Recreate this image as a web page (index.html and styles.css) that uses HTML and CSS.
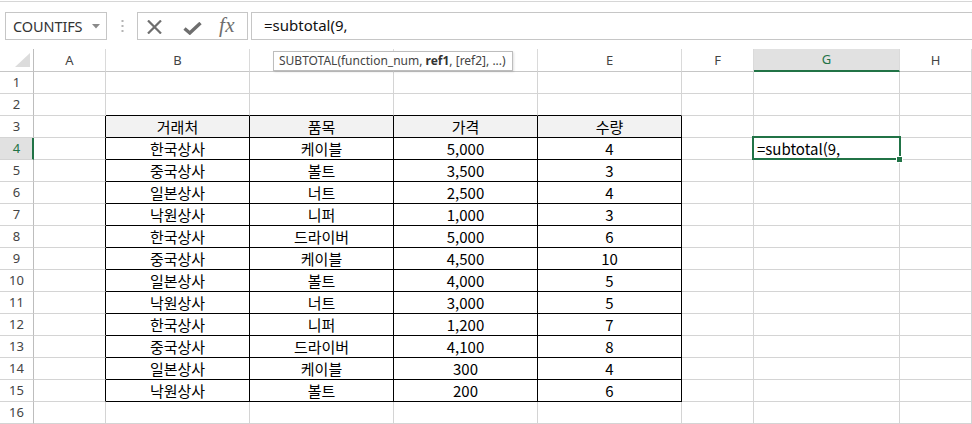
FILE: index.html
```html
<!DOCTYPE html>
<html lang="ko">
<head>
<meta charset="utf-8">
<title>Excel - SUBTOTAL</title>
<link rel="stylesheet" href="styles.css">
</head>
<body>
<div class="app">
  <div class="topline"></div>
  <div class="fbar">
    <div class="namebox">
      <span class="nb-text">COUNTIFS</span>
      <svg class="nb-arrow" width="8" height="5" viewBox="0 0 8 5"><path d="M0 0H8L4 4.5Z" fill="#8a8a8a"/></svg>
    </div>
    <div class="grip">
      <svg width="3" height="12" viewBox="0 0 3 12"><rect x="0.5" y="0" width="2" height="2" fill="#b4b4b4"/><rect x="0.5" y="5" width="2" height="2" fill="#b4b4b4"/><rect x="0.5" y="10" width="2" height="2" fill="#b4b4b4"/></svg>
    </div>
    <div class="fbtns">
      <svg class="ic-x" width="15" height="14" viewBox="0 0 15 14"><path d="M1 0.5L14 13.5M14 0.5L1 13.5" stroke="#6e6e6e" stroke-width="2.2" fill="none"/></svg>
      <svg class="ic-ok" width="19" height="13" viewBox="0 0 19 13"><path d="M1.5 6.5L6.8 11L17.5 1" stroke="#6e6e6e" stroke-width="3.4" fill="none" stroke-linejoin="miter"/></svg>
      <span class="fx">fx</span>
    </div>
    <div class="finput">=subtotal(9,</div>
  </div>

  <div class="sheet">
    <div class="row hdr">
      <div class="corner"><svg width="15" height="14" viewBox="0 0 15 14"><path d="M15 0V14H0Z" fill="#dcdcdc"/></svg></div>
      <div class="ch">A</div><div class="ch">B</div><div class="ch">C</div><div class="ch">D</div><div class="ch">E</div><div class="ch">F</div><div class="ch sel">G</div><div class="ch">H</div>
    </div>
    <div class="row"><div class="rh">1</div><div class="c"></div><div class="c"></div><div class="c"></div><div class="c"></div><div class="c"></div><div class="c"></div><div class="c"></div><div class="c"></div></div>
    <div class="row"><div class="rh">2</div><div class="c"></div><div class="c tt"></div><div class="c tt"></div><div class="c tt"></div><div class="c tt"></div><div class="c"></div><div class="c"></div><div class="c"></div></div>
    <div class="row"><div class="rh">3</div><div class="c tl"></div><div class="c t th">거래처</div><div class="c t th">품목</div><div class="c t th">가격</div><div class="c t th">수량</div><div class="c"></div><div class="c"></div><div class="c"></div></div>
    <div class="row"><div class="rh rsel">4</div><div class="c tl"></div><div class="c t">한국상사</div><div class="c t">케이블</div><div class="c t">5,000</div><div class="c t">4</div><div class="c"></div><div class="c active">=subtotal(9,</div><div class="c"></div></div>
    <div class="row"><div class="rh">5</div><div class="c tl"></div><div class="c t">중국상사</div><div class="c t">볼트</div><div class="c t">3,500</div><div class="c t">3</div><div class="c"></div><div class="c"></div><div class="c"></div></div>
    <div class="row"><div class="rh">6</div><div class="c tl"></div><div class="c t">일본상사</div><div class="c t">너트</div><div class="c t">2,500</div><div class="c t">4</div><div class="c"></div><div class="c"></div><div class="c"></div></div>
    <div class="row"><div class="rh">7</div><div class="c tl"></div><div class="c t">낙원상사</div><div class="c t">니퍼</div><div class="c t">1,000</div><div class="c t">3</div><div class="c"></div><div class="c"></div><div class="c"></div></div>
    <div class="row"><div class="rh">8</div><div class="c tl"></div><div class="c t">한국상사</div><div class="c t">드라이버</div><div class="c t">5,000</div><div class="c t">6</div><div class="c"></div><div class="c"></div><div class="c"></div></div>
    <div class="row"><div class="rh">9</div><div class="c tl"></div><div class="c t">중국상사</div><div class="c t">케이블</div><div class="c t">4,500</div><div class="c t">10</div><div class="c"></div><div class="c"></div><div class="c"></div></div>
    <div class="row"><div class="rh">10</div><div class="c tl"></div><div class="c t">일본상사</div><div class="c t">볼트</div><div class="c t">4,000</div><div class="c t">5</div><div class="c"></div><div class="c"></div><div class="c"></div></div>
    <div class="row"><div class="rh">11</div><div class="c tl"></div><div class="c t">낙원상사</div><div class="c t">너트</div><div class="c t">3,000</div><div class="c t">5</div><div class="c"></div><div class="c"></div><div class="c"></div></div>
    <div class="row"><div class="rh">12</div><div class="c tl"></div><div class="c t">한국상사</div><div class="c t">니퍼</div><div class="c t">1,200</div><div class="c t">7</div><div class="c"></div><div class="c"></div><div class="c"></div></div>
    <div class="row"><div class="rh">13</div><div class="c tl"></div><div class="c t">중국상사</div><div class="c t">드라이버</div><div class="c t">4,100</div><div class="c t">8</div><div class="c"></div><div class="c"></div><div class="c"></div></div>
    <div class="row"><div class="rh">14</div><div class="c tl"></div><div class="c t">일본상사</div><div class="c t">케이블</div><div class="c t">300</div><div class="c t">4</div><div class="c"></div><div class="c"></div><div class="c"></div></div>
    <div class="row"><div class="rh">15</div><div class="c tl"></div><div class="c t">낙원상사</div><div class="c t">볼트</div><div class="c t">200</div><div class="c t">6</div><div class="c"></div><div class="c"></div><div class="c"></div></div>
    <div class="row"><div class="rh">16</div><div class="c"></div><div class="c"></div><div class="c"></div><div class="c"></div><div class="c"></div><div class="c"></div><div class="c"></div><div class="c"></div></div>

    <div class="tip">SUBTOTAL(function_num, <b>ref1</b>, [ref2], ...)</div>
  </div>
</div>
</body>
</html>
```

FILE: styles.css
```css
* { box-sizing: border-box; }
html, body { margin: 0; padding: 0; background: #ffffff; }
body { width: 972px; height: 424px; overflow: hidden; font-family: "Noto Sans", "Noto Sans CJK KR", sans-serif; }

.topline { margin-top: 1px; height: 1px; background: #d6d6d6; }

.fbar {
  display: flex;
  align-items: stretch;
  height: 28px;
  margin-top: 10px;
}
.namebox {
  margin-left: 5px;
  width: 102px;
  border: 1px solid #c6c6c6;
  display: flex;
  align-items: center;
  justify-content: space-between;
  padding: 0 6px 0 7px;
}
.nb-text { font-size: 14.5px; color: #333; letter-spacing: -0.1px; }
.nb-arrow { display: block; margin-top: 1px; }
.grip { width: 30px; display: flex; align-items: center; justify-content: center; }
.grip svg { display: block; }
.fbtns {
  width: 111px;
  border: 1px solid #c6c6c6;
  display: flex;
  align-items: center;
  padding-left: 9px;
}
.ic-x { display: block; margin-top: 1px; }
.ic-ok { display: block; margin-left: 21px; margin-top: 4px; }
.fx {
  margin-left: 17px;
  font-family: "Liberation Serif", "DejaVu Serif", serif;
  font-style: italic;
  font-size: 21px;
  color: #6e6e6e;
  line-height: 1;
  margin-top: -1px;
  letter-spacing: 0.5px;
}
.finput {
  flex: 1;
  margin-left: 3px;
  border: 1px solid #c6c6c6;
  border-right: none;
  padding-left: 12px;
  font-size: 15px;
  color: #111;
  line-height: 25px;
}

.sheet { position: relative; margin-top: 9px; }
.row {
  display: grid;
  grid-template-columns: 34px 72px 144px 144px 144px 144px 72px 146px 72px;
  height: 22px;
}
.row.hdr { height: 23px; }

.corner, .ch, .rh, .c {
  border-right: 1px solid #d4d4d4;
  border-bottom: 1px solid #d4d4d4;
}
.corner {
  border-right-color: #bdbdbd;
  border-bottom-color: #c6c6c6;
  position: relative;
}
.corner svg { position: absolute; right: 3px; bottom: 4px; }
.ch {
  font-size: 13px;
  color: #444;
  text-align: center;
  line-height: 22px;
  border-bottom-color: #c6c6c6;
  border-right-color: #dadada;
}
.ch.sel {
  background: #e1e1e1;
  color: #217346;
  border-bottom: 2px solid #217346;
  line-height: 21px;
}
.rh {
  font-size: 13px;
  color: #444;
  text-align: center;
  line-height: 21px;
  border-right-color: #bdbdbd;
}
.rh.rsel {
  background: #e1e1e1;
  color: #217346;
  border-right: 2px solid #217346;
  padding-left: 1px;
}
.c {
  font-family: "Noto Sans CJK KR", "Noto Sans", sans-serif;
  font-size: 15px;
  color: #000;
  text-align: center;
  line-height: 21px;
  white-space: nowrap;
}
.c.t { border-right-color: #000; border-bottom-color: #000; }
.c.tl { border-right-color: #000; }
.c.tt { border-bottom-color: #000; }
.c.th { background: #f2f2f2; }

.c.active {
  position: relative;
  text-align: left;
  padding-left: 3px;
  overflow: visible;
}
.c.active::before {
  content: "";
  position: absolute;
  top: -2px;
  left: -2px;
  right: -2px;
  bottom: -1px;
  border: 2px solid #217346;
}
.c.active::after {
  content: "";
  position: absolute;
  right: -3px;
  bottom: -3px;
  width: 5px;
  height: 5px;
  background: #217346;
  outline: 1px solid #ffffff;
}

.tip {
  position: absolute;
  top: 2px;
  left: 273px;
  height: 20px;
  padding: 0 6px 0 5px;
  background: #fff;
  border: 1px solid #bdbdbd;
  box-shadow: 1px 1px 2px rgba(0,0,0,0.12);
  font-size: 12px;
  line-height: 18px;
  color: #444;
  white-space: nowrap;
}
.tip b { font-weight: 700; color: #333; }
```
